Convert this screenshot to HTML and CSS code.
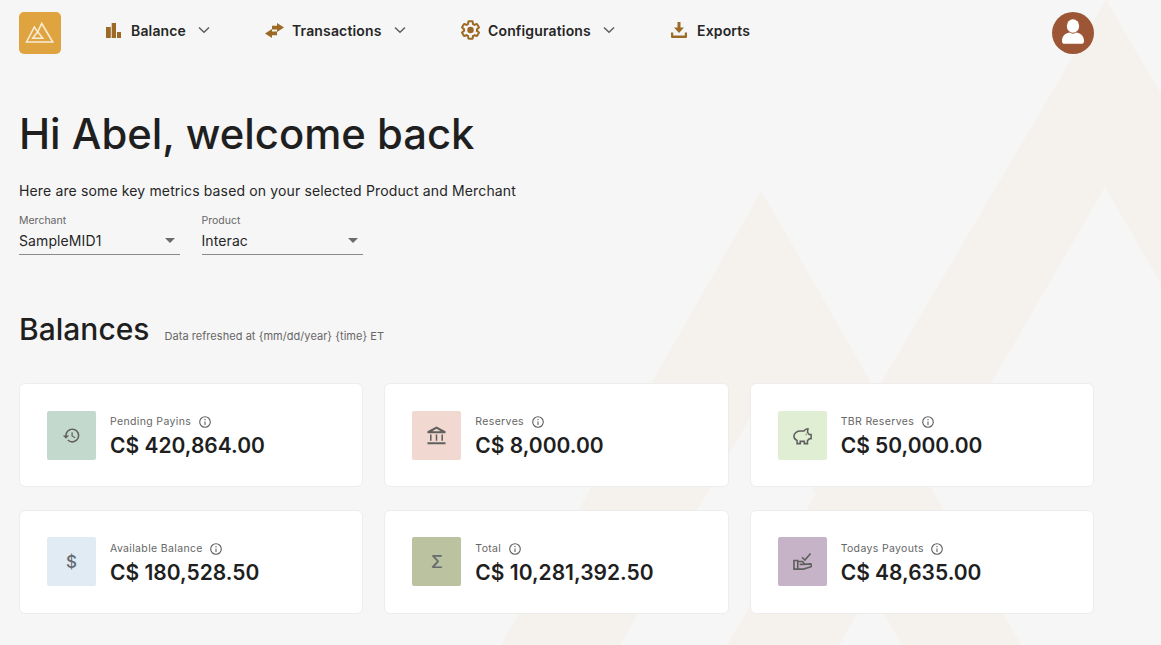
FILE: index.html
```html
<!DOCTYPE html>
<html lang="en">
  <head>
    <meta charset="UTF-8" />
    <meta name="viewport" content="width=device-width, initial-scale=1.0" />
    <title>Dashboard</title>
    <link rel="stylesheet" href="styles.css">
  </head>
  <body>
    <!-- background mountains -->
    <svg class="bg-art" viewBox="0 0 1161 645" aria-hidden="true">
      <path class="bg-shape" fill-rule="evenodd" d="M1106 0 L1485 645 L727 645 Z M1105 187 L839 645 L1371 645 Z" />
      <path class="bg-shape" fill-rule="evenodd" d="M761.5 191 L1021 645 L501 645 Z M761 399 L620 645 L902 645 Z" />
    </svg>

    <header class="topbar">
      <a class="logo" href="#">
        <svg viewBox="0 0 42 42" width="42" height="42">
          <path d="M7.5 30 L15.3 15 L18.7 20 L22.7 11.5 L33.8 30 Z" />
          <path d="M13.7 26.3 L18.7 19.7 L23.7 26.3 Z" />
        </svg>
      </a>
      <nav class="nav">
        <a class="nav-item nav-balance" href="#">
          <svg class="nav-icon" viewBox="0 0 15 15"><path d="M0 4h4.800v11H0zM5.700 0h4.300v15H5.700zM11 9h4v6h-4z" /></svg>
          <span>Balance</span>
          <svg class="chevron" viewBox="0 0 12 8"><path d="M1 1.500 L6 6.200 L11 1.500" /></svg>
        </a>
        <a class="nav-item nav-transactions" href="#">
          <svg class="nav-icon nav-icon-wide" viewBox="0 0 19 15"><path d="M12 0 L19 4.400 L12 9 V6.400 H7 V2.700 H12 Z" /><path d="M7 6 V8.600 H12 V12.300 H7 V15 L0 10.600 Z" /></svg>
          <span>Transactions</span>
          <svg class="chevron" viewBox="0 0 12 8"><path d="M1 1.500 L6 6.200 L11 1.500" /></svg>
        </a>
        <a class="nav-item nav-config" href="#">
          <svg class="nav-icon nav-icon-gear" viewBox="1.500 1 21 22"><path class="gear-line" d="M19.140 12.940c.04-.3.06-.61.06-.94 0-.32-.02-.64-.07-.94l2.030-1.580c.18-.14.23-.41.12-.61l-1.920-3.320c-.12-.22-.37-.29-.59-.22l-2.390.96c-.5-.38-1.030-.7-1.620-.94l-.36-2.540c-.04-.24-.24-.41-.48-.41h-3.840c-.24 0-.43.17-.47.41l-.36 2.540c-.59.24-1.130.57-1.620.94l-2.390-.96c-.22-.08-.47 0-.59.22L2.740 8.870c-.12.21-.08.47.12.61l2.030 1.580c-.05.3-.07.62-.07.94s.02.64.07.94l-2.030 1.580c-.18.14-.23.41-.12.61l1.920 3.320c.12.22.37.29.59.22l2.390-.96c.5.38 1.030.7 1.620.94l.36 2.540c.05.24.24.41.48.41h3.840c.24 0 .44-.17.47-.41l.36-2.540c.59-.24 1.130-.56 1.620-.94l2.390.96c.22.08.47 0 .59-.22l1.920-3.320c.12-.22.07-.47-.12-.61l-2.010-1.580z" /><circle cx="12" cy="12" r="3.600" /></svg>
          <span>Configurations</span>
          <svg class="chevron" viewBox="0 0 12 8"><path d="M1 1.500 L6 6.200 L11 1.500" /></svg>
        </a>
        <a class="nav-item nav-exports" href="#">
          <svg class="nav-icon nav-icon-export" viewBox="0 0 16 16"><path d="M6.500 0h3v5.500H13L8 11 3 5.500h3.500z" /><path d="M0 10.500h2.200v3h11.600v-3H16V14.500C16 15.500 15.500 16 14.500 16H1.500C.5 16 0 15.500 0 14.500z" /></svg>
          <span>Exports</span>
        </a>
      </nav>
      <a class="avatar" href="#">
        <svg viewBox="0 0 42 42" width="42" height="42">
          <ellipse cx="21" cy="14" rx="6.200" ry="6.800" />
          <path d="M10 29 C10 24 13 21.500 17.500 20.500 C20 22 22 22 24.500 20.500 C29 21.500 32 24 32 29 C32 31 31 31.800 29.500 31.800 H12.500 C11 31.800 10 31 10 29 Z" />
        </svg>
      </a>
    </header>

    <main class="content">
      <h1 class="welcome">Hi Abel, welcome back</h1>
      <p class="intro">Here are some key metrics based on your selected Product and Merchant</p>

      <div class="filters">
        <div class="select">
          <label class="select-label">Merchant</label>
          <div class="select-value"><span>SampleMID1</span><i class="caret"></i></div>
        </div>
        <div class="select">
          <label class="select-label">Product</label>
          <div class="select-value"><span>Interac</span><i class="caret"></i></div>
        </div>
      </div>

      <div class="section-head">
        <h2>Balances</h2>
        <span class="refreshed">Data refreshed at {mm/dd/year} {time} ET</span>
      </div>

      <div class="cards">
        <div class="card">
          <div class="card-icon tint-green">
            <svg class="solid" viewBox="0 0 24 24"><path d="M13 3a9 9 0 0 0-9 9H1l3.890 3.890.07.14L9 12H6c0-3.870 3.130-7 7-7s7 3.130 7 7-3.130 7-7 7c-1.930 0-3.680-.79-4.940-2.060l-1.420 1.420A8.954 8.954 0 0 0 13 21a9 9 0 0 0 0-18zm-1 5v5l4.280 2.540.72-1.210-3.500-2.080V8H12z" /></svg>
          </div>
          <div class="card-body">
            <div class="card-label">Pending Payins <svg class="info" viewBox="0 0 12 12"><circle cx="6" cy="6" r="5.300" /><path d="M6 5.400V9M6 3v1.200" /></svg></div>
            <div class="card-value">C$ 420,864.00</div>
          </div>
        </div>
        <div class="card">
          <div class="card-icon tint-rose">
            <svg class="solid" viewBox="2 1.500 20 20"><path fill-rule="evenodd" d="M12 2 L21.500 7 V9 H2.500 V7 Z M12 4.300 L7.500 7 H16.500 Z M2.500 18.500 H21.500 V20.800 H2.500 Z M5.200 10.500 H6.800 V17 H5.200 Z M11.200 10.500 H12.800 V17 H11.200 Z M17.200 10.500 H18.800 V17 H17.200 Z" /></svg>
          </div>
          <div class="card-body">
            <div class="card-label">Reserves <svg class="info" viewBox="0 0 12 12"><circle cx="6" cy="6" r="5.300" /><path d="M6 5.400V9M6 3v1.200" /></svg></div>
            <div class="card-value">C$ 8,000.00</div>
          </div>
        </div>
        <div class="card">
          <div class="card-icon tint-lime">
            <svg viewBox="2 1.500 21 20"><path d="M3 12 C3 8.500 7 6.500 10 6.500 H14 C15 5 17 4 18.500 4 L18 8 C19 9 19.500 10 20 10.500 H22 V15 H20 C19.500 16 19 16.500 18 17 V20.500 H14.500 V18 H10 V20.500 H6.500 V17 C4 16 3 14 3 12 Z" /><path d="M16 10.500h1" /></svg>
          </div>
          <div class="card-body">
            <div class="card-label">TBR Reserves <svg class="info" viewBox="0 0 12 12"><circle cx="6" cy="6" r="5.300" /><path d="M6 5.400V9M6 3v1.200" /></svg></div>
            <div class="card-value">C$ 50,000.00</div>
          </div>
        </div>
        <div class="card">
          <div class="card-icon tint-blue">
            <span class="glyph">$</span>
          </div>
          <div class="card-body">
            <div class="card-label">Available Balance <svg class="info" viewBox="0 0 12 12"><circle cx="6" cy="6" r="5.300" /><path d="M6 5.400V9M6 3v1.200" /></svg></div>
            <div class="card-value">C$ 180,528.50</div>
          </div>
        </div>
        <div class="card">
          <div class="card-icon tint-olive">
            <span class="glyph">Σ</span>
          </div>
          <div class="card-body">
            <div class="card-label">Total <svg class="info" viewBox="0 0 12 12"><circle cx="6" cy="6" r="5.300" /><path d="M6 5.400V9M6 3v1.200" /></svg></div>
            <div class="card-value">C$ 10,281,392.50</div>
          </div>
        </div>
        <div class="card">
          <div class="card-icon tint-plum">
            <svg viewBox="2 2.500 20 20"><path d="M3 11.500 H7 V20.500 H3 Z" /><path d="M7 12.500 H12 L14.500 15.500 H9 M13.500 15.500 L20 15 C22 15 22 18 20 18.300 L13 20.500 H7" /><path d="M11.500 8 L14.500 11 L20.500 4" /></svg>
          </div>
          <div class="card-body">
            <div class="card-label">Todays Payouts <svg class="info" viewBox="0 0 12 12"><circle cx="6" cy="6" r="5.300" /><path d="M6 5.400V9M6 3v1.200" /></svg></div>
            <div class="card-value">C$ 48,635.00</div>
          </div>
        </div>
      </div>
    </main>
  </body>
</html>
```

FILE: styles.css
```css
* {
  box-sizing: border-box;
}

html,
body {
  height: 100%;
}

body {
  margin: 0;
  background-color: #f6f6f6;
  color: #1f1f1f;
  font-family: "Inter", "Liberation Sans", sans-serif;
  overflow: hidden;
}

a {
  color: inherit;
  text-decoration: none;
}

.bg-art {
  position: absolute;
  top: 0;
  left: 0;
  width: 1161px;
  height: 645px;
}

.bg-shape {
  fill: #f5f2ed;
}

.topbar {
  position: relative;
  display: flex;
  align-items: center;
  justify-content: space-between;
  height: 42px;
  margin: 12px 67px 0 19px;
}

.logo {
  width: 42px;
  height: 42px;
  background-color: #dfa440;
  border-radius: 5px;
}

.logo svg {
  display: block;
  fill: none;
  stroke: #f8ecd4;
  stroke-width: 1.6;
}

.avatar svg {
  display: block;
}

.nav {
  display: flex;
  align-items: center;
  flex: 1;
  margin-left: 45px;
  padding-bottom: 6px;
}

.nav-item {
  display: flex;
  align-items: center;
  font-size: 14px;
  font-weight: 600;
  letter-spacing: 0.15px;
  color: #262626;
}

.nav-balance {
  width: 159px;
}

.nav-transactions {
  width: 196px;
}

.nav-config {
  width: 210px;
}

.nav-icon {
  width: 15px;
  height: 15px;
  margin-right: 10px;
  fill: #9c6a26;
}

.nav-icon-wide {
  width: 19px;
  margin-right: 8px;
}

.nav-icon-gear {
  width: 19px;
  height: 20px;
  margin-right: 8px;
}

.nav-icon-gear .gear-line {
  fill: none;
  stroke: #9c6a26;
  stroke-width: 2.2;
}

.nav-icon-export {
  width: 16px;
  height: 16px;
}

.chevron {
  width: 12px;
  height: 8px;
  margin-left: 12px;
  fill: none;
  stroke: #5f5f5f;
  stroke-width: 1.5;
}

.avatar {
  width: 42px;
  height: 42px;
  border-radius: 50%;
  background-color: #9c5636;
  fill: #fff;
}

.content {
  position: relative;
  margin: 0 67px 0 19px;
}

.welcome {
  margin: 52px 0 0;
  font-size: 41.8px;
  line-height: 56px;
  font-weight: 500;
}

.intro {
  margin: 19px 0 0;
  font-size: 14px;
  line-height: 20px;
  letter-spacing: 0.14px;
  color: #262626;
}

.filters {
  display: flex;
  gap: 21.5px;
  margin-top: 13px;
}

.select {
  width: 161px;
  border-bottom: 1px solid #8a8a8a;
}

.select-label {
  display: block;
  font-size: 10.5px;
  line-height: 14px;
  color: #666;
}

.select-value {
  display: flex;
  align-items: center;
  justify-content: space-between;
  height: 26px;
  padding-bottom: 2px;
  padding-right: 5px;
  font-size: 14px;
  letter-spacing: 0.1px;
  color: #262626;
}

.caret {
  width: 0;
  height: 0;
  border-left: 5px solid transparent;
  border-right: 5px solid transparent;
  border-top: 5px solid #6b6b6b;
}

.section-head {
  display: flex;
  align-items: baseline;
  gap: 15px;
  margin-top: 55px;
}

.section-head h2 {
  margin: 0;
  font-size: 30px;
  line-height: 38px;
  font-weight: 500;
}

.refreshed {
  font-size: 11px;
  letter-spacing: 0.05px;
  color: #666;
}

.cards {
  display: grid;
  grid-template-columns: repeat(3, 1fr);
  column-gap: 21px;
  row-gap: 22.8px;
  margin-top: 35px;
}

.card {
  display: flex;
  align-items: center;
  gap: 14px;
  height: 104px;
  padding-left: 27px;
  background-color: #fff;
  border: 1px solid #ededed;
  border-radius: 6px;
}

.card-icon {
  display: flex;
  align-items: center;
  justify-content: center;
  width: 49px;
  height: 49px;
  border-radius: 2px;
}

.card-icon svg {
  width: 19px;
  height: 19px;
  fill: none;
  stroke: #5f5f5f;
  stroke-width: 1.7;
}

.card-icon svg.solid {
  fill: #5f5f5f;
  stroke: none;
}

.glyph {
  font-size: 17px;
  font-weight: 500;
  color: #666b70;
}

.tint-green {
  background-color: #c4d9cd;
}

.tint-rose {
  background-color: #f1d8d1;
}

.tint-lime {
  background-color: #e0efd3;
}

.tint-blue {
  background-color: #e1ebf4;
}

.tint-olive {
  background-color: #bbc2a0;
}

.tint-plum {
  background-color: #c7b3c7;
}

.card-body {
  padding-top: 5px;
}

.card-label {
  display: flex;
  align-items: center;
  gap: 7.5px;
  font-size: 10.5px;
  line-height: 14px;
  letter-spacing: 0.35px;
  color: #666;
}

.info {
  width: 12px;
  height: 12px;
  fill: none;
  stroke: #5f5f5f;
  stroke-width: 1.1;
}

.card-value {
  margin-top: 2.5px;
  font-size: 21px;
  line-height: 28px;
  font-weight: 600;
  color: #1f1f1f;
}
```
